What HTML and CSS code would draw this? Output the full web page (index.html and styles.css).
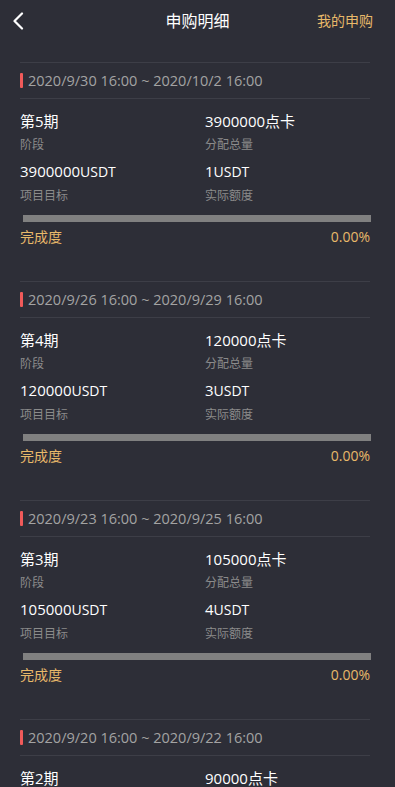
FILE: index.html
```html
<!DOCTYPE html>
<html lang="zh-CN">
<head>
<meta charset="utf-8">
<title>申购明细</title>
<link rel="stylesheet" href="styles.css">
</head>
<body>
<header class="topbar">
  <a class="back" href="#" aria-label="返回">
    <svg width="12" height="18" viewBox="0 0 12 18"><polyline points="10,1.5 2.5,9 10,16.5" fill="none" stroke="#ffffff" stroke-width="2.2" stroke-linecap="round" stroke-linejoin="round"/></svg>
  </a>
  <h1 class="title">申购明细</h1>
  <a class="mine" href="#">我的申购</a>
</header>

<main class="list">
  <section class="card">
    <div class="period"><span class="mark"></span>2020/9/30 16:00 ~ 2020/10/2 16:00</div>
    <div class="grid">
      <div class="cell"><div class="value">第5期</div><div class="label">阶段</div></div>
      <div class="cell"><div class="value">3900000点卡</div><div class="label">分配总量</div></div>
      <div class="cell"><div class="value">3900000<span class="unit">USDT</span></div><div class="label">项目目标</div></div>
      <div class="cell"><div class="value">1<span class="unit">USDT</span></div><div class="label">实际额度</div></div>
    </div>
    <div class="bar"><div class="fill" style="width:0%"></div></div>
    <div class="done"><span>完成度</span><span>0.00%</span></div>
  </section>

  <section class="card">
    <div class="period"><span class="mark"></span>2020/9/26 16:00 ~ 2020/9/29 16:00</div>
    <div class="grid">
      <div class="cell"><div class="value">第4期</div><div class="label">阶段</div></div>
      <div class="cell"><div class="value">120000点卡</div><div class="label">分配总量</div></div>
      <div class="cell"><div class="value">120000<span class="unit">USDT</span></div><div class="label">项目目标</div></div>
      <div class="cell"><div class="value">3<span class="unit">USDT</span></div><div class="label">实际额度</div></div>
    </div>
    <div class="bar"><div class="fill" style="width:0%"></div></div>
    <div class="done"><span>完成度</span><span>0.00%</span></div>
  </section>

  <section class="card">
    <div class="period"><span class="mark"></span>2020/9/23 16:00 ~ 2020/9/25 16:00</div>
    <div class="grid">
      <div class="cell"><div class="value">第3期</div><div class="label">阶段</div></div>
      <div class="cell"><div class="value">105000点卡</div><div class="label">分配总量</div></div>
      <div class="cell"><div class="value">105000<span class="unit">USDT</span></div><div class="label">项目目标</div></div>
      <div class="cell"><div class="value">4<span class="unit">USDT</span></div><div class="label">实际额度</div></div>
    </div>
    <div class="bar"><div class="fill" style="width:0%"></div></div>
    <div class="done"><span>完成度</span><span>0.00%</span></div>
  </section>

  <section class="card">
    <div class="period"><span class="mark"></span>2020/9/20 16:00 ~ 2020/9/22 16:00</div>
    <div class="grid">
      <div class="cell"><div class="value">第2期</div><div class="label">阶段</div></div>
      <div class="cell"><div class="value">90000点卡</div><div class="label">分配总量</div></div>
      <div class="cell"><div class="value">90000<span class="unit">USDT</span></div><div class="label">项目目标</div></div>
      <div class="cell"><div class="value">2<span class="unit">USDT</span></div><div class="label">实际额度</div></div>
    </div>
    <div class="bar"><div class="fill" style="width:0%"></div></div>
    <div class="done"><span>完成度</span><span>0.00%</span></div>
  </section>
</main>
</body>
</html>
```

FILE: styles.css
```css
html, body {
  margin: 0;
  padding: 0;
  background: #2d2e37;
}
body {
  font-family: "Open Sans", "Noto Sans CJK SC", sans-serif;
  color: #ffffff;
}
.topbar {
  height: 42px;
  display: flex;
  align-items: center;
  justify-content: space-between;
  padding: 0 22px 0 12px;
  position: relative;
}
.back {
  display: flex;
  align-items: center;
  width: 14px;
  height: 42px;
}
.title {
  position: absolute;
  left: 0;
  right: 0;
  top: 0;
  margin: 0;
  text-align: center;
  font-size: 16px;
  font-weight: normal;
  line-height: 42px;
  color: #ffffff;
  pointer-events: none;
}
.mine {
  font-size: 14px;
  color: #e8b96a;
  text-decoration: none;
  line-height: 42px;
}
.list {
  padding: 20px 25px 0 20px;
}
.card {
  margin-bottom: 33px;
  border-top: 1px solid #3d3e47;
}
.period {
  display: flex;
  align-items: center;
  height: 35px;
  border-bottom: 1px solid #3d3e47;
  font-size: 14.5px;
  color: #a3a3a3;
}
.mark {
  width: 3px;
  height: 15px;
  background: #f05a5a;
  border-radius: 1px;
  margin-right: 5px;
}
.grid {
  display: grid;
  grid-template-columns: 185px 1fr;
  row-gap: 4px;
  padding-top: 11px;
}
.value {
  font-size: 15px;
  line-height: 22px;
  color: #ffffff;
}
.unit {
  font-size: 14px;
}
.label {
  font-size: 12px;
  line-height: 22px;
  padding-top: 2px;
  color: #8b8b8b;
}
.bar {
  margin: 8px -1px 0 3px;
  height: 7px;
  background: #808080;
}
.fill {
  height: 100%;
  background: #e8b96a;
}
.done {
  display: flex;
  justify-content: space-between;
  margin-top: 4px;
  font-size: 14px;
  line-height: 22px;
  color: #e8b96a;
}
```
